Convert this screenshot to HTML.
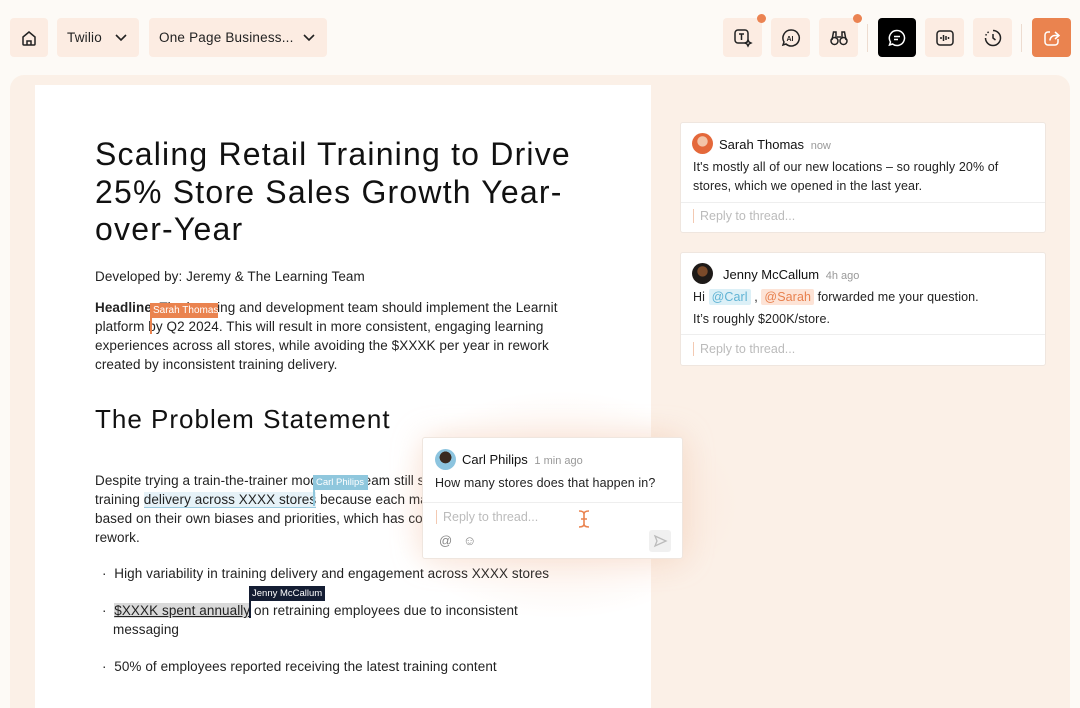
<!DOCTYPE html>
<html><head><meta charset="utf-8"><style>
*{box-sizing:border-box;margin:0;padding:0}
html,body{width:1080px;height:708px;overflow:hidden}
body{background:#fdfaf6;font-family:"Liberation Sans","DejaVu Sans",sans-serif;color:#1a1a1a;position:relative}
.btn{position:absolute;top:18px;height:39px;background:#fcece2;border-radius:4px;display:flex;align-items:center;justify-content:center}
.dd{font-size:13.5px;color:#222;justify-content:flex-start;padding-left:10px;letter-spacing:.2px}
.dd svg{position:absolute;right:12px}
.dot{position:absolute;width:9px;height:9px;border-radius:50%;background:#eb8352;top:-4px;right:-4px}
.main{position:absolute;left:10px;top:75px;width:1060px;height:633px;background:#fbf0e7;border-radius:14px 14px 0 0}
.doc{position:absolute;left:35px;top:85px;width:616px;height:623px;background:#fff}
.ab{position:absolute;white-space:nowrap}
h1{position:absolute;left:95px;top:136px;font-size:32px;font-weight:400;line-height:37.5px;color:#111;white-space:nowrap;letter-spacing:1.2px}
.p{font-size:13.5px;line-height:19px;color:#222;letter-spacing:.08px}
.tag{position:absolute;font-size:9.5px;color:#fff;padding:2px 3px;white-space:nowrap;letter-spacing:0}
.card{position:absolute;background:#fff;border-radius:3px;border:1px solid #efe6df}
.nm{font-size:13px;color:#111}
.tm{font-size:11px;color:#999}
.ct{font-size:12.5px;color:#222;line-height:19px;letter-spacing:.1px}
.rp{font-size:12.5px;color:#bbb;border-left:1.5px solid #f3c9b2;padding-left:6px}
.av{position:absolute;width:21px;height:21px;border-radius:50%}
</style></head><body>
<div class="btn" style="left:10px;width:38px"><svg width="18" height="18" viewBox="0 0 18 18" fill="none" stroke="#222" stroke-width="1.5"><path d="M3 8l6-5 6 5v7a1 1 0 0 1-1 1H4a1 1 0 0 1-1-1z"/><path d="M7 16v-4h4v4"/></svg></div>
<div class="btn dd" style="left:57px;width:82px">Twilio<svg width="12" height="8" viewBox="0 0 12 8" fill="none" stroke="#222" stroke-width="1.6"><path d="M1 1l5 5 5-5"/></svg></div>
<div class="btn dd" style="left:149px;width:178px">One Page Business...<svg width="12" height="8" viewBox="0 0 12 8" fill="none" stroke="#222" stroke-width="1.6"><path d="M1 1l5 5 5-5"/></svg></div>

<div class="btn" style="left:723px;width:39px"><svg width="20" height="20" viewBox="0 0 20 20" fill="none" stroke="#222" stroke-width="1.5"><rect x="2" y="2" width="13" height="13" rx="3"/><path d="M6 6h5M8.5 6v6"/><path d="M15 12l1 2 2 1-2 1-1 2-1-2-2-1 2-1z"/></svg><div class="dot"></div></div>
<div class="btn" style="left:771px;width:39px"><svg width="20" height="20" viewBox="0 0 20 20" fill="none" stroke="#222" stroke-width="1.5"><path d="M10 2a8 8 0 1 1-5 14l-3 1 1-3A8 8 0 0 1 10 2z"/><text x="5.5" y="13" font-size="7" font-weight="700" fill="#222" stroke="none" font-family="Liberation Sans">AI</text></svg></div>
<div class="btn" style="left:819px;width:39px"><svg width="20" height="20" viewBox="0 0 20 20" fill="none" stroke="#222" stroke-width="1.5"><circle cx="5.5" cy="13" r="3.5"/><circle cx="14.5" cy="13" r="3.5"/><path d="M3 12l1.5-8h2.5v6M17 12l-1.5-8H13v6M8 9h4"/></svg><div class="dot"></div></div>
<div style="position:absolute;left:867px;top:24px;width:1px;height:28px;background:#eddcd0"></div>
<div class="btn" style="left:878px;width:38px;background:#000"><svg width="20" height="20" viewBox="0 0 20 20" fill="none" stroke="#fff" stroke-width="1.5"><path d="M10 2.5a7.5 7.5 0 1 1-4.5 13.5L2.5 17l1-3A7.5 7.5 0 0 1 10 2.5z"/><path d="M7 8.5h6M7 11.5h4"/></svg></div>
<div class="btn" style="left:925px;width:39px"><svg width="20" height="20" viewBox="0 0 20 20" fill="none" stroke="#222" stroke-width="1.5"><rect x="2" y="3" width="16" height="14" rx="3"/><path d="M6 9v2M8.5 7v6M11 8v4M13.5 9v2"/></svg></div>
<div class="btn" style="left:973px;width:39px"><svg width="20" height="20" viewBox="0 0 20 20" fill="none" stroke="#222" stroke-width="1.5"><path d="M10 2.5a7.5 7.5 0 1 1-7.5 7.5" /><path d="M2.8 7.5l.6-1.5M4.5 4.8l1.2-1" stroke-dasharray="1.5 1.5"/><path d="M10 6v4l2.5 2"/></svg></div>
<div style="position:absolute;left:1021px;top:24px;width:1px;height:28px;background:#eddcd0"></div>
<div class="btn" style="left:1032px;width:39px;background:#ea834f"><svg width="20" height="20" viewBox="0 0 20 20" fill="none" stroke="#fff" stroke-width="1.5"><path d="M16 11v3a3 3 0 0 1-3 3H6a3 3 0 0 1-3-3V7a3 3 0 0 1 3-3h2"/><path d="M13 4l4 3.5-4 3.5M17 7.5h-4a5 5 0 0 0-5 5"/></svg></div>

<div class="main"></div>
<div class="doc"></div>
<div style="position:absolute;left:380px;top:390px;width:360px;height:230px;background:radial-gradient(ellipse at center,rgba(248,214,194,.55),rgba(248,214,194,0) 70%)"></div>

<h1>Scaling Retail Training to Drive<br>25% Store Sales Growth Year-<br>over-Year</h1>
<div class="ab p" style="left:95px;top:267px">Developed by: Jeremy &amp; The Learning Team</div>
<div class="ab p" style="left:95px;top:298px"><b>Headline</b>: The learning and development team should implement the Learnit<br>platform by Q2 2024. This will result in more consistent, engaging learning<br>experiences across all stores, while avoiding the $XXXK per year in rework<br>created by inconsistent training delivery.</div>
<div class="tag" style="left:150px;top:303px;background:#ea834f;font-size:10px;width:68px">Sarah Thomas</div>
<div style="position:absolute;left:150px;top:318px;width:1.5px;height:16px;background:#ea834f"></div>
<div class="ab" style="left:95px;top:404px;font-size:26px;color:#111;letter-spacing:1px">The Problem Statement</div>
<div class="ab p" style="left:95px;top:471px">Despite trying a train-the-trainer model, our team still struggles with<br>training <span style="background:#e6f2f8;border-bottom:1px solid #9ccbe0">delivery across XXXX stores</span> because each manager delivers<br>based on their own biases and priorities, which has cost us<br>rework.</div>
<div class="tag" style="left:313px;top:475px;background:#8fc7dd;font-size:9.5px;width:55px">Carl Philips</div>
<div style="position:absolute;left:313px;top:490px;width:1.5px;height:16px;background:#8fc7dd"></div>
<div class="ab p" style="left:102px;top:564px">·&nbsp; High variability in training delivery and engagement across XXXX stores</div>
<div class="ab p" style="left:102px;top:601px">·&nbsp; <span style="background:#d9d9d9;text-decoration:underline">$XXXK spent annually</span> on retraining employees due to inconsistent<br><span style="padding-left:11px">messaging</span></div>
<div class="tag" style="left:249px;top:586px;background:#141d33;font-size:9.5px">Jenny McCallum</div>
<div style="position:absolute;left:249px;top:600px;width:1.5px;height:18px;background:#141d33"></div>
<div class="ab p" style="left:102px;top:657px">·&nbsp; 50% of employees reported receiving the latest training content</div>

<div class="card" style="left:422px;top:437px;width:261px;height:122px;box-shadow:0 0 30px rgba(240,190,160,.4)">
<div class="av" style="left:12px;top:11px;background:radial-gradient(circle at 50% 40%,#3a2a20 35%,#8cc4df 37%)"></div>
<div class="ab nm" style="left:39px;top:14px">Carl Philips <span class="tm">&nbsp;1 min ago</span></div>
<div class="ab ct" style="left:12px;top:36px">How many stores does that happen in?</div>
<div style="position:absolute;left:0;right:0;top:64px;height:1px;background:#eee"></div>
<div class="ab rp" style="left:13px;top:72px">Reply to thread...</div>
<svg style="position:absolute;left:154px;top:71px" width="14" height="20" viewBox="0 0 14 20" fill="none" stroke="#ea834f" stroke-width="1.6"><path d="M2 2c3 0 5 1 5 3v10c0 2-2 3-5 3M12 2c-3 0-5 1-5 3v10c0 2 2 3 5 3M4 10h6"/></svg>
<div class="ab" style="left:16px;top:95px;color:#888;font-size:13px">@ &nbsp;&nbsp;☺</div>
<div style="position:absolute;left:226px;top:92px;width:22px;height:22px;background:#f0f0f0;border-radius:3px"><svg width="22" height="22" viewBox="0 0 22 22" fill="none" stroke="#bbb" stroke-width="1.3"><path d="M6 6l11 5-11 5 2-5z"/></svg></div>
</div>

<div class="card" style="left:680px;top:122px;width:366px;height:111px">
<div class="av" style="left:11px;top:10px;background:radial-gradient(circle at 50% 40%,#f3c4a8 30%,#e4683a 33%)"></div>
<div class="ab nm" style="left:38px;top:14px">Sarah Thomas <span class="tm">&nbsp;now</span></div>
<div class="ab ct" style="left:12px;top:35px">It's mostly all of our new locations – so roughly 20% of<br>stores, which we opened in the last year.</div>
<div style="position:absolute;left:0;right:0;top:79px;height:1px;background:#eee"></div>
<div class="ab rp" style="left:12px;top:86px">Reply to thread...</div>
</div>
<div class="card" style="left:680px;top:252px;width:366px;height:114px">
<div class="av" style="left:11px;top:10px;background:radial-gradient(circle at 50% 40%,#7a4a2a 30%,#1e1a18 33%)"></div>
<div class="ab nm" style="left:42px;top:14px">Jenny McCallum <span class="tm">&nbsp;4h ago</span></div>
<div class="ab ct" style="left:12px;top:35px">Hi <span style="background:#dcf0f7;color:#5fb3d4;padding:1px 3px;border-radius:2px">@Carl</span> , <span style="background:#fde3d6;color:#e8814f;padding:1px 3px;border-radius:2px">@Sarah</span> forwarded me your question.</div>
<div class="ab ct" style="left:12px;top:57px">It’s roughly $200K/store.</div>
<div style="position:absolute;left:0;right:0;top:81px;height:1px;background:#eee"></div>
<div class="ab rp" style="left:12px;top:89px">Reply to thread...</div>
</div>
</body></html>
